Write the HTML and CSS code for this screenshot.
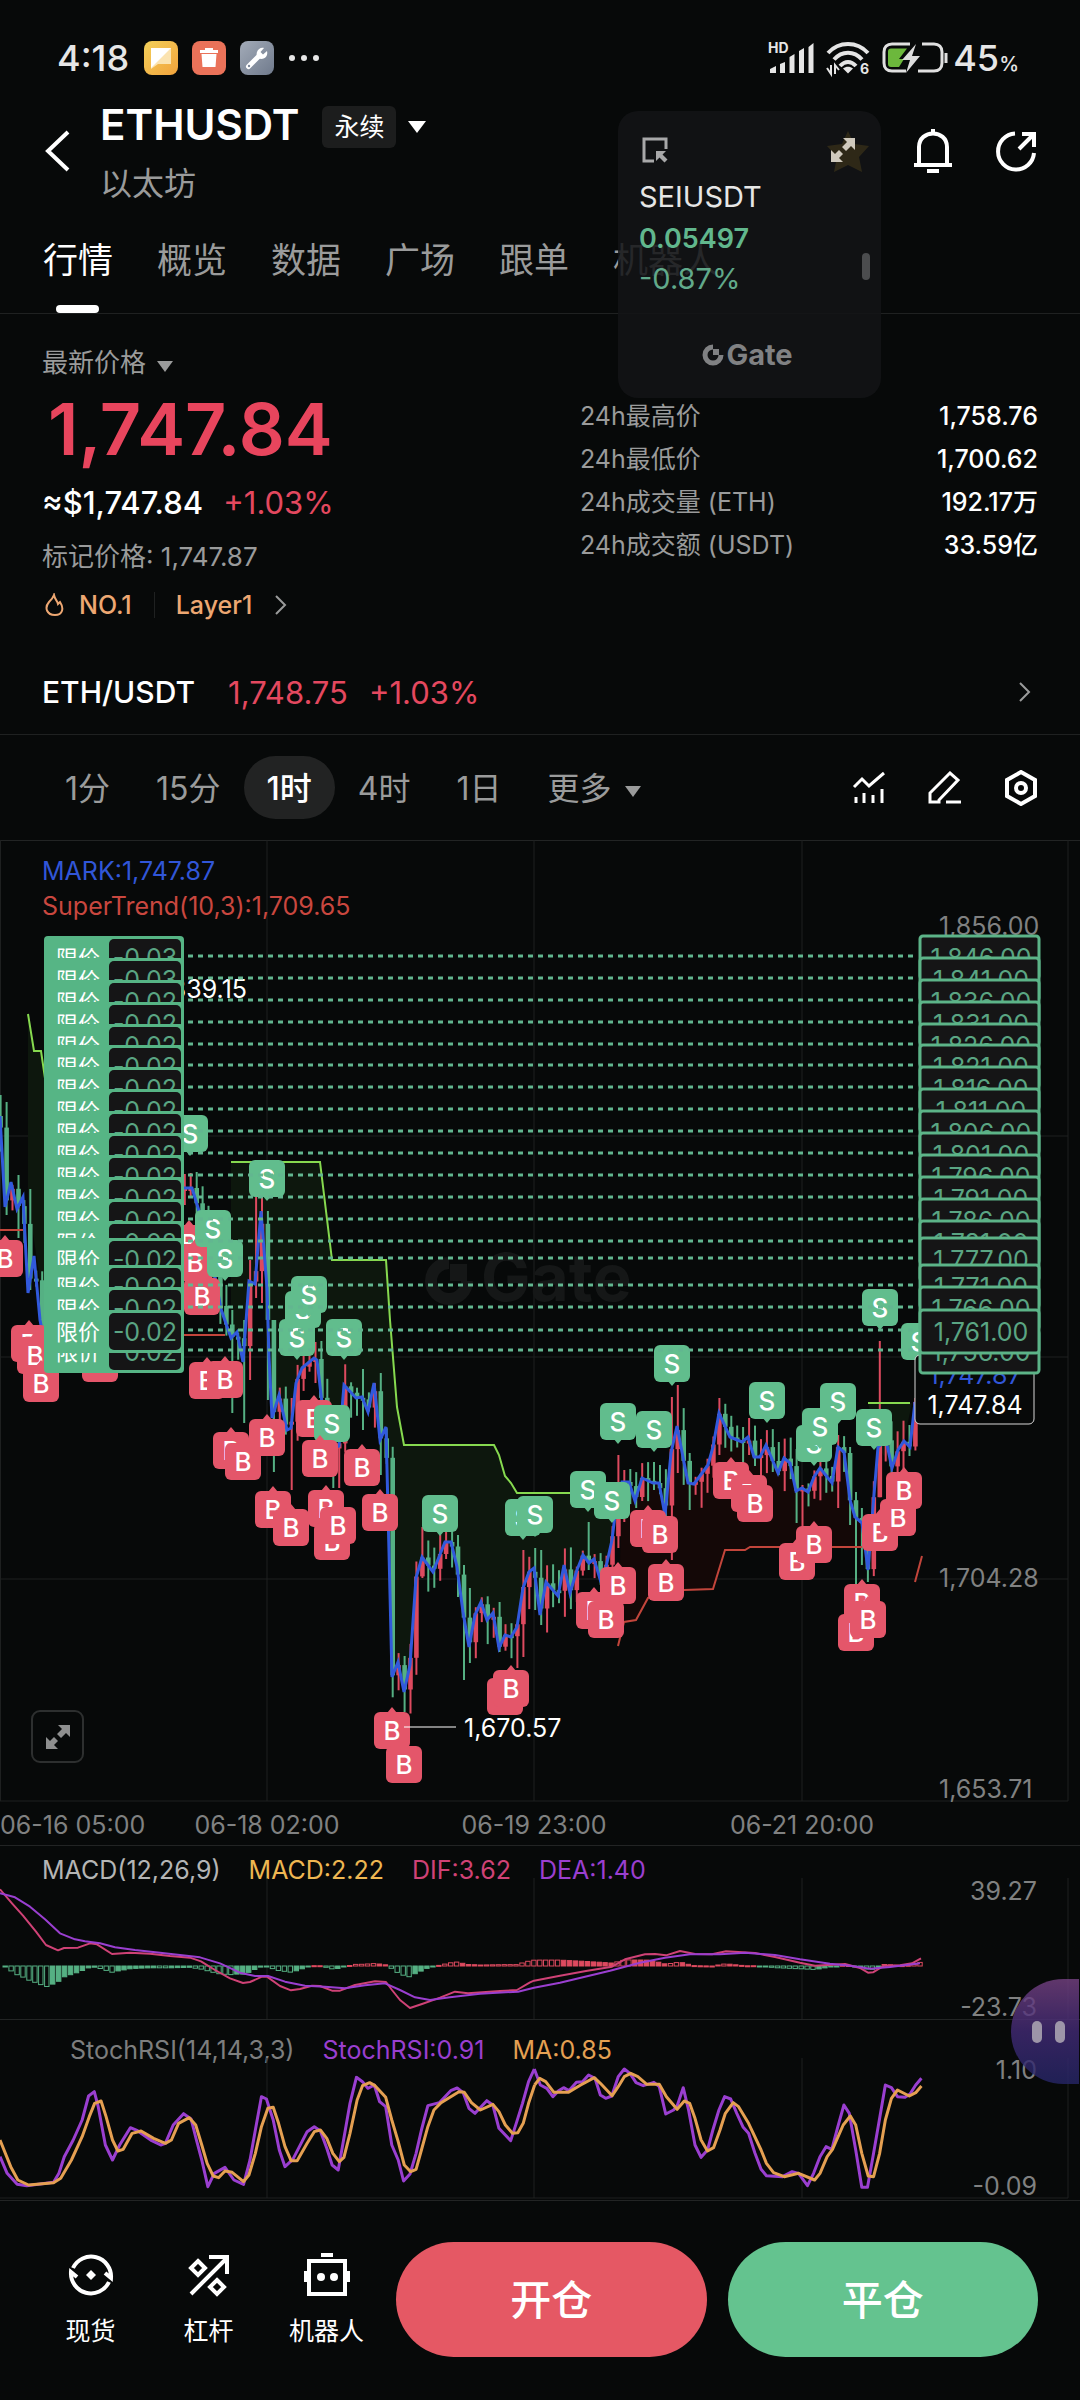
FILE: index.html
```html
<!DOCTYPE html>
<html lang="zh-CN">
<head>
  <meta charset="UTF-8">
  <meta name="viewport" content="width=device-width, initial-scale=1.0">
  <title>ETHUSDT 永续</title>
  <link rel="stylesheet" href="styles.css">
</head>
<body>

  <!-- 状态栏 -->
  <div class="status-bar">
    <span class="clock">4:18</span>
    <svg class="app-icon" viewBox="0 0 34 34">
      <defs><linearGradient id="note" x1="0" y1="0" x2="1" y2="1"><stop offset="0" stop-color="#f3d05a"/><stop offset="1" stop-color="#f2a33c"/></linearGradient></defs>
      <rect width="34" height="34" rx="8" fill="url(#note)"/><path d="M7 7h20v16H14L7 28z" fill="#fbe3b0"/><path d="M7 7h20L7 27z" fill="#fff"/>
    </svg>
    <svg class="app-icon" viewBox="0 0 34 34">
      <rect width="34" height="34" rx="8" fill="#ea7259"/><path d="M13 7h8v2h5v3H8V9h5zM9.500 13h15l-1 13h-13z" fill="#fff"/>
    </svg>
    <svg class="app-icon" viewBox="0 0 34 34">
      <defs><linearGradient id="tool" x1="0" y1="0" x2="1" y2="1"><stop offset="0" stop-color="#a3abb8"/><stop offset="1" stop-color="#6f7a8c"/></linearGradient></defs>
      <rect width="34" height="34" rx="8" fill="url(#tool)"/><path d="M8.500 25.500L19 15" stroke="#fff" stroke-width="5" stroke-linecap="round"/><path d="M24 7l-3.500 4 2.500 2.500L27 10c1 4-1 8-6 8-4-1-5-4-4-7 1-3 4-5 7-4z" fill="#fff"/><circle cx="9" cy="25" r="1.200" fill="#7c8798"/>
    </svg>
    <svg class="dots" viewBox="0 0 32 8"><circle cx="4" cy="4" r="3"/><circle cx="16" cy="4" r="3"/><circle cx="28" cy="4" r="3"/></svg>

    <svg class="signal" viewBox="0 0 48 34">
      <text x="0" y="12">HD</text>
      <path d="M2 32v-4l6-3v7zM12 32v-9l5-2v11zM21.500 32V16l5-3v19zM31 32V10l5-3v25zM40.500 32V6l5-4v30z"/>
    </svg>
    <svg class="wifi" viewBox="0 0 46 34">
      <g fill="none" stroke="#e4e4e4" stroke-width="4"><path d="M2 12c11-12 29-12 40 0"/><path d="M8 18.500c8-9 20-9 28 0"/><path d="M14 25c5-5.500 11-5.500 16 0"/></g>
      <path d="M17 27.500c3-2.500 7-2.500 10 0l-5 5z"/><path d="M1 27l4 6v-9M9 33v-9l4 5" fill="none" stroke="#e4e4e4" stroke-width="2"/>
      <text x="34" y="33">6</text>
    </svg>
    <svg class="battery" viewBox="0 0 66 32">
      <path d="M28 2H10c-5 0-8 3-8 8v11c0 5 3 8 8 8h14M36 29h16c5 0 8-3 8-8V10c0-5-3-8-8-8h-12" fill="none" stroke="#e0e0e0" stroke-width="3"/>
      <path d="M9 6.500h16L17 17h5l-5 8H9c-2 0-3-1-3-3V9.500c0-2 1-3 3-3z" fill="#6cb83c"/>
      <path d="M34 2L20 18h8l-4 13 14-17h-8z" fill="#dcdcdc"/><path d="M64 11v10" stroke="#e0e0e0" stroke-width="3"/>
    </svg>
    <span class="charge">45<small>%</small></span>
  </div>

  <!-- 标题 -->
  <header class="header">
    <button class="icon-btn" aria-label="返回"><svg width="28" height="44" viewBox="0 0 28 44"><path d="M26 2L6 21l20 19" class="line"/></svg></button>
    <div class="titles">
      <div class="title-row">
        <h1>ETHUSDT</h1>
        <span class="badge">永续</span>
        <svg width="18" height="12" viewBox="0 0 18 12"><path d="M0 0h18L9 12z" fill="#fff"/></svg>
      </div>
      <p>以太坊</p>
    </div>
    <div class="actions">
      <button class="icon-btn" aria-label="收藏"><svg width="44" height="44" viewBox="0 0 44 44"><path d="M22 1l6 13 15 2-10 11 3 15-14-7-14 7 3-15L1 16l15-2z" fill="#d6a51e"/></svg></button>
      <button class="icon-btn" aria-label="提醒"><svg width="40" height="46" viewBox="0 0 40 46"><path d="M20 0v5M6 36V18C6 0 34 0 34 18v18M1 36h38" class="line"/><path d="M14 40h12v4H14z" fill="#fff"/></svg></button>
      <button class="icon-btn" aria-label="分享"><svg width="42" height="42" viewBox="0 0 42 42"><path d="M19 2.500A18 18 0 1 0 38 22M23 18L36 5M26 3h12v13" class="line"/></svg></button>
    </div>
  </header>

  <nav class="tabs">
    <a href="#" class="active">行情</a>
    <a href="#">概览</a>
    <a href="#">数据</a>
    <a href="#">广场</a>
    <a href="#">跟单</a>
    <a href="#">机器人</a>
  </nav>

  <!-- 悬浮行情窗 -->
  <aside class="float-card">
    <div class="float-top">
      <svg width="26" height="26" viewBox="0 0 26 26"><path d="M24 12V2H2v22h10" fill="none" stroke="#a8a8a9" stroke-width="3"/><path d="M14 14h10l-3.500 3.500 5 5-3 3-5-5L14 24z" fill="#a8a8a9"/></svg>
      <svg width="26" height="26" viewBox="0 0 26 26"><path d="M13 1h12v12l-4-4-5 5-4-4 5-5zM1 13l4 4 4-4 4 4-4 4 4 4H1z" fill="#cfc9bd"/></svg>
    </div>
    <div class="float-name">SEIUSDT</div>
    <div class="float-price">0.05497</div>
    <div class="float-change">-0.87%</div>
    <div class="float-logo">
      <svg width="22" height="22" viewBox="0 0 22 22"><path d="M11 3a8 8 0 1 0 8 8" fill="none" stroke="#808183" stroke-width="5"/><path d="M11 5h6v6h-6z" fill="#808183"/></svg>Gate
    </div>
    <span class="float-handle"></span>
  </aside>

  <!-- 价格 -->
  <section class="ticker">
    <div>
      <div class="price-label">最新价格 <svg width="16" height="11" viewBox="0 0 16 11"><path d="M0 0h16L8 11z" fill="#9a9b9b"/></svg></div>
      <div class="price">1,747.84</div>
      <div class="fiat">≈$1,747.84 <span class="up">+1.03%</span></div>
      <div class="mark-price">标记价格: 1,747.87</div>
      <div class="tags">
        <svg width="24" height="24" viewBox="-3 0 24 24"><path d="M9 2c1 5 3 5 4 9l2-2c4 6 3 13-5 13S-1 15 4 9c2-2 4-4 5-7z" fill="none" stroke="#eda772" stroke-width="2"/></svg>
        <span>NO.1</span><i></i><span>Layer1</span>
        <svg width="12" height="22" viewBox="0 0 12 22"><path d="M1 2l9 9-9 9" class="chevron"/></svg>
      </div>
    </div>
    <dl class="stats">
      <dt>24h最高价</dt><dd>1,758.76</dd>
      <dt>24h最低价</dt><dd>1,700.62</dd>
      <dt>24h成交量 (ETH)</dt><dd>192.17万</dd>
      <dt>24h成交额 (USDT)</dt><dd>33.59亿</dd>
    </dl>
  </section>

  <a class="spot" href="#">
    <strong>ETH/USDT</strong>
    <span class="up">1,748.75</span>
    <span class="up">+1.03%</span>
    <svg width="12" height="22" viewBox="0 0 12 22"><path d="M1 2l9 9-9 9" class="chevron"/></svg>
  </a>

  <!-- 周期 -->
  <div class="toolbar">
    <button>1分</button>
    <button>15分</button>
    <button class="active">1时</button>
    <button>4时</button>
    <button>1日</button>
    <button>更多 <svg width="16" height="11" viewBox="0 0 16 11"><path d="M0 0h16L8 11z" fill="#9a9b9b"/></svg></button>
    <div class="tools">
      <button class="icon-btn" aria-label="指标"><svg width="34" height="34" viewBox="0 0 34 34"><path d="M2 16L10 8l7 7L32 2M4 26v6M12 22v10M21 24v8M30 18v14" class="line thin"/></svg></button>
      <button class="icon-btn" aria-label="画线"><svg width="34" height="34" viewBox="0 0 34 34"><path d="M2 31v-9L22 2l8 7L11 29v2zM18 31h15" class="line thin"/></svg></button>
      <button class="icon-btn" aria-label="设置"><svg width="34" height="36" viewBox="0 0 34 36"><path d="M17 2l14 8v16l-14 8-14-8V10z" class="line"/><circle cx="17" cy="18" r="5" class="line"/></svg></button>
    </div>
  </div>

  <!-- K线 -->
  <section class="panel main-panel">
    <div class="overlay-legend">
      <span class="c-blue">MARK:1,747.87</span>
      <span class="c-red">SuperTrend(10,3):1,709.65</span>
    </div>
    <svg id="mainChart" class="chart" viewBox="0 840 1080 1005"></svg>
    <button class="expand" aria-label="全屏"><svg width="26" height="26" viewBox="0 0 26 26"><path d="M13 1h12v12l-4-4-5 5-4-4 5-5zM1 13l4 4 4-4 4 4-4 4 4 4H1z" fill="#8e8f8f"/></svg></button>
  </section>

  <section class="panel">
    <div class="legend">
      <span class="c-light">MACD(12,26,9)</span>
      <span class="c-gold">MACD:2.22</span>
      <span class="c-pink">DIF:3.62</span>
      <span class="c-purple">DEA:1.40</span>
    </div>
    <svg id="macdChart" class="chart" viewBox="0 0 1080 133"></svg>
  </section>

  <section class="panel stoch-panel">
    <div class="legend">
      <span class="c-gray">StochRSI(14,14,3,3)</span>
      <span class="c-purple">StochRSI:0.91</span>
      <span class="c-orange">MA:0.85</span>
    </div>
    <svg class="chart" viewBox="0 0 1080 132">
      <path class="grid" d="M267 -8V132M534 -8V132M802 -8V132M1068 -8V132M0 132H1068"/>
      <text class="axis" x="1037" y="13" text-anchor="end">1.10</text>
      <text class="axis" x="1037" y="129" text-anchor="end">-0.09</text>
      <svg width="1080" height="132" viewBox="0 738 3024 396" preserveAspectRatio="none" overflow="visible">
        <polyline class="stoch-k" points="0,1010 20,1060 48,1093 75,1097 150,1087 165,1060 180,1010 205,960 230,900 248,828 264,815 275,860 295,975 315,1020 335,975 365,923 385,932 425,962 450,975 463,970 485,915 514,881 535,897 550,960 565,1020 582,1100 600,1060 630,1042 655,1080 682,1093 700,1020 715,930 732,830 746,837 765,900 782,990 798,1040 820,1018 860,935 880,920 897,933 915,985 930,1035 947,1050 962,960 980,850 998,772 1015,785 1030,805 1048,795 1063,845 1080,860 1097,975 1115,1020 1130,1083 1148,1062 1165,1000 1180,930 1198,857 1230,848 1262,812 1280,804 1297,818 1313,865 1330,880 1347,860 1363,842 1380,855 1397,925 1430,962 1447,905 1463,850 1480,785 1496,747"/>
        <polyline class="stoch-d" points="0,960 30,1040 50,1080 80,1095 150,1088 170,1075 200,1020 230,950 250,890 265,850 283,843 297,890 315,960 330,993 345,988 370,940 395,933 430,955 463,970 480,960 500,910 530,893 548,915 565,975 580,1030 597,1068 612,1073 630,1053 650,1057 682,1085 697,1065 715,1000 732,920 750,865 765,862 780,910 798,980 815,1022 832,1022 860,970 880,935 897,930 915,955 932,1000 950,1025 963,1012 980,940 1000,840 1015,797 1035,788 1050,797 1080,832 1097,900 1115,965 1132,1035 1150,1055 1165,1048 1180,990 1198,920 1215,870 1235,848 1285,815 1300,817 1320,848 1345,870 1380,853 1397,875 1415,915 1435,940 1450,938 1465,910 1480,850 1497,795"/>
        <g transform="translate(1456 0)">
          <polyline class="stoch-k" points="40,747 57,795 75,805 92,830 108,812 122,803 137,812 158,787 175,785 192,765 210,775 225,825 240,835 257,828 275,770 292,747 308,760 325,788 345,797 375,787 390,800 408,882 430,870 440,858 457,803 472,870 490,975 507,1012 525,990 540,930 557,870 573,830 590,837 607,880 625,922 640,940 658,1000 675,1048 690,1067 735,1070 762,1055 780,1060 805,1097 822,1060 840,1010 857,980 873,988 890,920 907,855 922,880 940,990 957,1102 973,1102 990,1000 1007,895 1023,795 1040,803 1057,830 1078,832 1092,822 1108,795 1124,775"/>
          <polyline class="stoch-d" points="41,795 55,775 72,785 95,817 135,817 170,795 208,773 225,790 258,827 275,800 292,770 310,760 330,770 355,793 390,793 410,830 440,868 460,843 475,850 490,895 507,960 525,993 542,983 560,930 575,880 597,848 612,860 640,910 675,990 690,1030 710,1058 740,1070 780,1060 825,1080 840,1060 860,1010 875,988 905,915 925,888 940,915 957,1000 975,1068 990,1070 1007,1000 1023,900 1040,835 1057,810 1090,828 1108,818 1124,798"/>
        </g>
      </svg>
    </svg>
    <button class="assistant" aria-label="助手"><i></i><i></i></button>
  </section>

  <!-- 底部操作 -->
  <footer class="bottom-bar">
    <a href="#"><svg width="48" height="48" viewBox="0 0 48 48"><path d="M6 17A20 20 0 0 1 44 27l-6-5M42 31A20 20 0 0 1 4 21l6 5" class="line"/><path d="M24 19l5 5-5 5-5-5z" fill="#fff"/></svg>现货</a>
    <a href="#"><svg width="48" height="48" viewBox="0 0 48 48"><path d="M6 43L41 8M24 6h18v17M13 10l7 7-7 7-7-7zM32 29l7 7-7 7-7-7z" class="line"/></svg>杠杆</a>
    <a href="#"><svg width="48" height="48" viewBox="0 0 48 48"><path d="M6 10h36v33H6zM3 20v11M45 20v11" class="line"/><path d="M18 2h12v4H18z" fill="#fff"/><circle cx="18" cy="26" r="4" fill="#fff"/><circle cx="31" cy="26" r="4" fill="#fff"/></svg>机器人</a>
    <button class="open">开仓</button>
    <button class="close">平仓</button>
  </footer>

  <script src="chart.js"></script>
</body>
</html>
```
FILE: styles.css
```css
* {
  box-sizing: border-box;
}

body {
  position: relative;
  margin: 0;
  min-height: 100vh;
  display: flex;
  flex-direction: column;
  background-color: #070909;
  color: #fff;
  font-family: Inter, "Noto Sans CJK SC", sans-serif;
  font-size: 26px;
}

button {
  background: none;
  border: none;
  padding: 0;
  color: inherit;
  font-family: inherit;
  cursor: pointer;
}

a {
  color: inherit;
  text-decoration: none;
}

svg {
  flex: none;
}

.icon-btn {
  display: flex;
}

.line {
  fill: none;
  stroke: #fff;
  stroke-width: 4;
}

.line.thin {
  stroke-width: 3;
}

.chevron {
  fill: none;
  stroke: #9a9b9b;
  stroke-width: 2;
}

.up {
  color: #e4485f;
}

/* status bar */
.status-bar {
  display: flex;
  align-items: center;
  height: 100px;
  padding: 16px 61px 0 57px;
  color: #e6e6e6;
}

.clock {
  font-size: 36px;
  font-weight: 500;
  margin-right: 15px;
}

.app-icon {
  width: 34px;
  height: 34px;
  margin-right: 14px;
}

.dots {
  width: 32px;
  fill: #e6e6e6;
  margin-right: auto;
}

.signal,
.wifi {
  height: 34px;
  margin-right: 10px;
  fill: #e6e6e6;
  font-size: 14px;
  font-weight: 700;
  overflow: visible;
}

.battery {
  width: 66px;
  margin-right: 5px;
}

.charge {
  font-size: 36px;
  font-weight: 500;
}

.charge small {
  font-size: 20px;
}

/* header */
.header {
  display: flex;
  align-items: center;
  padding: 0 42px;
}

.titles {
  margin-left: 30px;
}

.title-row {
  display: flex;
  align-items: center;
  height: 48px;
}

h1 {
  margin: 0 23px 0 0;
  font-size: 42px;
  font-weight: 600;
}

.badge {
  padding: 0 12px;
  margin: 6px 12px 0 0;
  border-radius: 6px;
  background-color: #1c1d1d;
  font-size: 25px;
  line-height: 42px;
}

.title-row svg {
  margin-top: 6px;
}

.titles p {
  margin: 16px 0 0;
  color: #9a9b9b;
  font-size: 32px;
  line-height: 40px;
}

.actions {
  display: flex;
  align-items: center;
  gap: 43px;
  margin-left: auto;
}

.tabs {
  display: flex;
  gap: 44px;
  padding: 32px 43px 0;
  border-bottom: 1px solid #1f2121;
  color: #9a9b9b;
  font-size: 35px;
  line-height: 48px;
}

.tabs a {
  position: relative;
  padding-bottom: 29px;
}

.tabs .active {
  color: #fff;
}

.tabs .active::after {
  content: "";
  position: absolute;
  left: 13px;
  right: 14px;
  bottom: 0;
  height: 8px;
  border-radius: 4px;
  background-color: #fff;
}

/* floating quote */
.float-card {
  position: absolute;
  top: 111px;
  right: 199px;
  width: 263px;
  height: 287px;
  padding: 26px 25px 25px 21px;
  border-radius: 20px;
  background-color: rgba(19, 20, 22, 0.86);
  display: flex;
  flex-direction: column;
  z-index: 2;
}

.float-top {
  display: flex;
  justify-content: space-between;
  padding-left: 3px;
}

.float-name {
  margin-top: 14px;
  color: #e6e6e6;
  font-size: 29px;
  line-height: 40px;
}

.float-price {
  color: #61b78d;
  font-size: 27px;
  font-weight: 600;
  line-height: 44px;
}

.float-change {
  color: #61a98a;
  font-size: 29px;
  line-height: 36px;
}

.float-logo {
  display: flex;
  align-items: center;
  justify-content: center;
  gap: 2px;
  margin-top: auto;
  color: #808183;
  font-size: 29px;
  font-weight: 700;
  line-height: 36px;
}

.float-handle {
  position: absolute;
  right: 11px;
  top: 142px;
  width: 8px;
  height: 27px;
  border-radius: 4px;
  background-color: #4b4c4e;
}

/* ticker */
.ticker {
  display: grid;
  grid-template-columns: 538fr 458fr;
  padding: 31px 42px 0;
  color: #9a9b9b;
}

.price-label,
.mark-price,
.tags {
  font-size: 26px;
  line-height: 36px;
}

.price-label svg {
  margin-left: 4px;
}

.price {
  margin: 4px 0 10px 6px;
  color: #e8455d;
  font-size: 72px;
  font-weight: 600;
  line-height: 88px;
}

.fiat {
  color: #fff;
  font-size: 31px;
  font-weight: 500;
  line-height: 40px;
}

.fiat .up {
  margin-left: 12px;
  font-weight: 400;
}

.mark-price {
  margin-top: 16px;
}

.tags {
  display: flex;
  align-items: center;
  margin-top: 12px;
  color: #eda772;
  font-size: 25px;
  font-weight: 500;
}

.tags span {
  margin-left: 13px;
}

.tags i {
  width: 1px;
  height: 26px;
  margin: 0 8px 0 22px;
  background-color: #1f2121;
}

.tags svg:last-child {
  margin-left: 23px;
}

.stats {
  display: grid;
  grid-template-columns: 1fr auto;
  align-content: start;
  margin: 50px 0 0;
  font-size: 25px;
  line-height: 43px;
}

.stats dd {
  margin: 0;
  color: #fff;
  font-weight: 500;
  text-align: right;
}

.spot {
  display: flex;
  align-items: center;
  height: 85px;
  margin-top: 27px;
  padding: 0 49px 0 42px;
  border-bottom: 1px solid #1f2121;
  font-size: 30px;
}

.spot strong {
  margin-right: 12px;
  font-weight: 500;
}

.spot .up {
  margin-left: 21px;
  font-size: 31px;
}

.spot svg {
  margin-left: auto;
}

/* intervals */
.toolbar {
  display: flex;
  align-items: center;
  height: 105px;
  padding: 0 42px;
}

.toolbar > button {
  height: 63px;
  padding: 0 23px 4px;
  border-radius: 32px;
  color: #9a9b9b;
  font-size: 32px;
}

.toolbar > .active {
  background-color: #222323;
  color: #fff;
  font-weight: 500;
}

.toolbar > button svg {
  margin: 0 0 3px 4px;
}

.tools {
  display: flex;
  align-items: center;
  gap: 42px;
  margin-left: auto;
}

/* charts */
.panel {
  position: relative;
  border-top: 1px solid #222424;
}

.chart {
  display: block;
  width: 100%;
  overflow: visible;
  font-size: 25px;
}

.main-panel .chart {
  margin-top: -1px;
}

.overlay-legend {
  position: absolute;
  top: 13px;
  left: 42px;
  display: flex;
  flex-direction: column;
  font-size: 25px;
  line-height: 35px;
}

.legend {
  display: flex;
  gap: 28px;
  padding: 8px 42px 0;
  font-size: 25px;
  line-height: 32px;
}

.stoch-panel {
  margin-bottom: 2px;
}

.stoch-panel .legend {
  padding: 14px 70px 0;
}

.c-blue { color: #3156d8; }
.c-red { color: #c9473f; }
.c-light { color: #b4b5b5; }
.c-gray { color: #7d7e7e; }
.c-gold { color: #eeb752; }
.c-pink { color: #cf4276; }
.c-purple { color: #9a3fd0; }
.c-orange { color: #e5a052; }

.grid {
  fill: none;
  stroke: #1e2020;
  stroke-width: 1;
}

.axis {
  fill: #808181;
}

.axis-white {
  fill: #fff;
}

.watermark text {
  fill: #151717;
  font-size: 66px;
  font-weight: 700;
}

.green { fill: #61bd8d; }
.red { fill: #e4566a; }
.candle-up { fill: #dd4a5f; }
.candle-down { fill: #55b083; }

.mark-line {
  fill: none;
  stroke: #3159dc;
  stroke-width: 3;
}

.trend-up,
.trend-down {
  fill: none;
  stroke: #c2453b;
  stroke-width: 2;
}

.trend-down {
  stroke: #86d94f;
}

.fill-down { fill: #0d170d; }
.fill-up { fill: #140807; }

.marker text {
  fill: #fff;
  font-size: 26px;
  font-weight: 500;
  text-anchor: middle;
}

.order-line {
  stroke: #62b690;
  stroke-width: 3;
  stroke-dasharray: 5 5;
}

.tag-text {
  fill: #fff;
  font-size: 22px;
}

.tag-box {
  fill: #151516;
  stroke: #5cb488;
  stroke-width: 3;
}

.tag-qty {
  fill: #151516;
}

.tag-value {
  fill: #5aa583;
  text-anchor: middle;
}

.last-price {
  fill: #070909;
  stroke: #d8d8d8;
  stroke-width: 1;
}

.dif,
.dea,
.stoch-k,
.stoch-d {
  fill: none;
  stroke: #cf4276;
  stroke-width: 3;
  stroke-linejoin: round;
  vector-effect: non-scaling-stroke;
}

.dif,
.dea {
  stroke-width: 2;
}

.dea,
.stoch-k {
  stroke: #9a3fd0;
}

.stoch-d {
  stroke: #e5a052;
}

.expand {
  position: absolute;
  left: 31px;
  bottom: 82px;
  width: 53px;
  height: 53px;
  display: flex;
  align-items: center;
  justify-content: center;
  border: 2px solid #2d2f2f;
  border-radius: 9px;
}

.assistant {
  position: absolute;
  top: -41px;
  right: 1px;
  width: 68px;
  height: 105px;
  display: flex;
  align-items: center;
  justify-content: flex-end;
  gap: 13px;
  padding-right: 14px;
  border-radius: 53px 0 0 53px;
  background: linear-gradient(rgba(118, 66, 132, 0.8), rgba(66, 42, 118, 0.8) 50%, rgba(38, 38, 104, 0.8));
}

.assistant i {
  width: 10px;
  height: 22px;
  border-radius: 5px;
  background-color: #9d95a8;
}

/* bottom bar */
.bottom-bar {
  display: grid;
  grid-template-columns: 97px 97px 97px 1fr 1fr;
  align-items: center;
  gap: 21px;
  flex: 1;
  padding: 0 42px 2px;
  border-top: 1px solid #222424;
}

.bottom-bar a {
  display: flex;
  flex-direction: column;
  align-items: center;
  gap: 14px;
  font-size: 25px;
  line-height: 36px;
}

.bottom-bar button {
  height: 115px;
  padding-bottom: 6px;
  border-radius: 58px;
  font-size: 41px;
  font-weight: 500;
}

.open {
  background-color: #e55864;
}

.close {
  background-color: #64c38f;
}
```
FILE: chart.js
```js
// 标记价格折线
const mark = [
  [[0,1116],[5,1207],[11,1182],[17,1209],[23,1197],[28,1293],[34,1256],[40,1320],[46,1350]],
  [[180,1188],[186,1188],[192,1188],[199,1211],[210,1250],[221,1309],[231,1338],[237,1332],[243,1362],[249,1281],[255,1284],[261,1211],[267,1288],[269,1356],[272,1418],[279,1395],[287,1430],[291,1428],[296,1383],[302,1368],[314,1358],[317,1360],[322,1403],[330,1450],[339,1446],[344,1385],[356,1398],[362,1397],[368,1412],[374,1383],[380,1440],[386,1427],[392,1677],[398,1662],[404,1692],[410,1665],[416,1578],[422,1557],[433,1572],[439,1557],[445,1542],[451,1542],[457,1567],[463,1612],[469,1647],[475,1615],[481,1602],[487,1620],[493,1613],[499,1648],[505,1635],[511,1637],[517,1627],[523,1588],[529,1572],[534,1568],[540,1615],[546,1582],[558,1596],[564,1565],[570,1593],[577,1570],[583,1555],[589,1563],[594,1559],[600,1579],[606,1567],[612,1540],[616,1507],[622,1482],[629,1482],[635,1501],[642,1478],[653,1483],[659,1483],[665,1515],[671,1453],[677,1426],[688,1483],[694,1484],[708,1465],[713,1447],[719,1413],[730,1437],[742,1442],[748,1437],[754,1457],[760,1457],[766,1445],[778,1473],[784,1458],[790,1463],[796,1491],[802,1488],[808,1492],[814,1477],[820,1468],[832,1483],[838,1447],[844,1452],[850,1500],[855,1517],[862,1523],[868,1570],[873,1507],[878,1447],[886,1440],[892,1468],[898,1450],[904,1441],[910,1447],[915,1402]]
];

// 长影线: x, 高, 低
const longWicks = [
  [5,1102,1215], [17,1175,1238], [28,1189,1290], [243,1320,1423], [231,1310,1413], [249,1260,1380],
  [255,1197,1298], [261,1198,1303], [267,1211,1400], [273,1380,1472], [291,1398,1490], [332,1440,1488],
  [338,1430,1488], [362,1369,1430], [380,1373,1475], [404,1656,1712], [422,1527,1578], [457,1535,1597],
  [463,1565,1680], [469,1588,1663], [499,1602,1652], [517,1625,1668], [523,1550,1657], [534,1548,1610],
  [540,1550,1625], [588,1522,1570], [618,1455,1548], [654,1462,1490], [671,1397,1560], [677,1385,1473],
  [690,1453,1510], [719,1398,1455], [748,1418,1455], [796,1449,1523], [802,1485,1530], [838,1435,1508],
  [850,1447,1525], [856,1492,1585], [862,1508,1565], [868,1520,1582], [880,1341,1495], [909,1425,1456]
];

// 委托: 价格, y, 数量
const orders = [
  ['1,846.00',956,'-0.03'], ['1,841.00',978,'-0.03'], ['1,836.00',1000,'-0.02'], ['1,831.00',1022,'-0.02'],
  ['1,826.00',1044,'-0.02'], ['1,821.00',1065,'-0.02'], ['1,816.00',1087,'-0.02'], ['1,811.00',1109,'-0.02'],
  ['1,806.00',1131,'-0.02'], ['1,801.00',1153,'-0.02'], ['1,796.00',1175,'-0.02'], ['1,791.00',1197,'-0.02'],
  ['1,786.00',1219,'-0.02'], ['1,781.00',1241,'-0.02'], ['1,777.00',1258,'-0.02'], ['1,771.00',1285,'-0.02'],
  ['1,766.00',1307,'-0.02'], ['1,756.00',1350,'-0.02'], ['1,761.00',1330,'-0.02']
];

// 买卖点
const markers = [
  ['B',5,1258], ['B',29,1343], ['B',35,1355], ['B',41,1383], ['B',100,1363], ['B',189,1243], ['B',195,1262],
  ['B',202,1296], ['S',190,1133], ['S',213,1228], ['S',225,1258], ['S',267,1178], ['S',303,1309],
  ['S',309,1294], ['S',297,1337], ['S',344,1337], ['B',207,1380], ['B',225,1379], ['B',231,1450],
  ['B',243,1461], ['B',267,1437], ['B',314,1418], ['S',332,1423], ['B',320,1458], ['B',362,1467],
  ['B',273,1509], ['B',291,1527], ['B',326,1508], ['B',332,1541], ['B',338,1525], ['B',380,1512],
  ['S',440,1513], ['S',523,1517], ['S',535,1514], ['B',392,1730], ['B',404,1764], ['B',505,1696],
  ['B',511,1688], ['S',672,1363], ['S',767,1400], ['S',838,1401], ['S',814,1443], ['S',820,1426],
  ['S',874,1427], ['S',618,1421], ['S',654,1429], ['S',588,1489], ['S',612,1500], ['S',919,1341],
  ['S',880,1307], ['B',648,1528], ['B',660,1534], ['B',731,1480], ['B',749,1493], ['B',755,1503],
  ['B',618,1585], ['B',594,1610], ['B',606,1619], ['B',666,1582], ['B',797,1561], ['B',814,1544],
  ['B',880,1532], ['B',898,1517], ['B',904,1490], ['B',862,1602], ['B',856,1632], ['B',868,1619]
];

const STEP = 5.94;

function valueAt(line, x) {
  for (let i = 1; i < line.length; i++) {
    const [x0, y0] = line[i - 1];
    const [x1, y1] = line[i];
    if (x <= x1) return y0 + (y1 - y0) * (x - x0) / (x1 - x0);
  }
  return line[line.length - 1][1];
}

function drawMain() {
  let s = '<path class="grid" d="M0.5 840V1801M267 840V1801M534 840V1801M802 840V1801M1068 840V1801M0 1136H1068M0 1357H1068M0 1579H1068M0 1801H1068"/>';

  s += '<g class="watermark"><path d="M449 1263A18 18 0 1 0 467 1281" fill="none" stroke="#151717" stroke-width="12"/><path d="M450 1264h17v17h-17z" fill="#151717"/><text x="481" y="1301">Gate</text></g>';

  // SuperTrend 区域
  const line = mark[1];
  const part = (a, b) => line.filter(p => p[0] >= a && p[0] <= b).reverse().map(p => p.join()).join(' ');
  const down = '231,1162 320,1162 332,1260 386,1260 390,1320 397,1407 404,1445 494,1445 499,1455 505,1476 511,1483 517,1493 570,1493';
  const up = '618,1646 624,1622 636,1620 648,1598 684,1590 713,1589 725,1550 745,1550 750,1547 862,1547';
  s += `<polygon class="fill-down" points="${down} 612,1500 ${part(231, 612)}"/>`;
  s += '<polygon class="fill-down" points="28,1014 34,1051 41,1051 46,1085 46,1320 28,1200"/><polygon class="fill-down" points="868,1403 912,1403 904,1441 892,1468 878,1447"/>';
  s += `<polygon class="fill-up" points="${up} ${part(618, 868)}"/>`;

  // 蜡烛
  mark.forEach(line => {
    const start = line[0][0];
    for (let x = 915.4, n = 0; x > start; x -= STEP, n++) {
      if (x > line[line.length - 1][0] + 1) continue;
      const close = valueAt(line, x);
      const open = valueAt(line, Math.max(start, x - STEP));
      const cls = close <= open ? 'candle-up' : 'candle-down';
      let top = Math.min(open, close);
      const height = Math.max(3, Math.abs(close - open));
      let high = top - 4 - (n * 37 % 19);
      let low = top + height + 4 + (n * 53 % 23);
      const wick = longWicks.find(w => Math.abs(w[0] - x) < STEP / 2);
      if (wick) {
        high = Math.min(top, wick[1]);
        low = Math.max(top + height, wick[2]);
      }
      s += `<rect class="${cls}" x="${(x - 1).toFixed(1)}" y="${high.toFixed(1)}" width="2" height="${(low - high).toFixed(1)}"/>`;
      s += `<rect class="${cls}" x="${(x - 2.3).toFixed(1)}" y="${top.toFixed(1)}" width="4.6" height="${height.toFixed(1)}"/>`;
    }
    s += `<polyline class="mark-line" points="${line.map(p => p.join()).join(' ')}"/>`;
  });

  s += `<polyline class="trend-down" points="${down}"/><polyline class="trend-down" points="28,1014 34,1051 41,1051 46,1085"/><path class="trend-down" d="M868 1403H910"/>`;
  s += `<polyline class="trend-up" points="${up}"/><path class="trend-up" d="M915 1582L922 1556M0 1230H23M184 1335H225"/>`;

  markers.forEach(([side, x, y]) => {
    const tip = side === 'S' ? `M${x - 5} ${y + 17}l5 6 5-6z` : `M${x - 5} ${y - 17}l5-6 5 6z`;
    s += `<g class="marker ${side === 'S' ? 'green' : 'red'}"><rect x="${x - 18}" y="${y - 18}" width="36" height="37" rx="6"/><path d="${tip}"/><text x="${x}" y="${y + 10}">${side}</text></g>`;
  });

  // 价格轴
  s += '<text class="axis" x="939" y="935">1,856.00</text><text class="axis" x="939" y="1587">1,704.28</text><text class="axis" x="939" y="1798">1,653.71</text>';
  s += '<text class="axis-white" x="247" y="998" text-anchor="end">1,839.15</text>';
  s += '<path d="M404 1727H456" stroke="#fff"/><text class="axis-white" x="464" y="1737">1,670.57</text>';
  s += '<rect class="last-price" x="915" y="1355" width="119" height="69" rx="5"/><text x="975" y="1384" fill="#3156d8" text-anchor="middle">1,747.87</text><text class="axis-white" x="975" y="1414" text-anchor="middle">1,747.84</text>';

  // 委托线和标签
  orders.forEach(o => {
    s += `<path class="order-line" d="M188 ${o[1]}H918"/>`;
  });
  orders.forEach(([price, y, qty]) => {
    s += `<rect x="44" y="${y - 20}" width="140" height="43" rx="4" fill="#56b585"/><text class="tag-text" x="56" y="${y + 10}">限价</text>`;
    s += `<rect class="tag-qty" x="109" y="${y - 17}" width="72" height="37" rx="5"/><text class="tag-value" x="145" y="${y + 11}">${qty}</text>`;
    s += `<rect class="tag-box" x="920" y="${y - 20}" width="119" height="43" rx="3"/><text class="tag-value" x="981" y="${y + 11}">${price}</text>`;
  });

  // 时间轴
  s += '<text class="axis" x="0" y="1834">06-16 05:00</text>';
  [['06-18 02:00', 267], ['06-19 23:00', 534], ['06-21 20:00', 802]].forEach(([t, x]) => {
    s += `<text class="axis" x="${x}" y="1834" text-anchor="middle">${t}</text>`;
  });
  document.getElementById('mainChart').innerHTML = s;
}

const dif = [[0,208],[12,250],[23,287],[36,335],[46,375],[58,391],[64,384],[78,383],[90,370],[97,373],[112,402],[130,398],[150,401],[170,408],[190,413],[201,424],[215,450],[230,475],[243,489],[250,486],[262,470],[267,470],[280,498],[291,511],[300,507],[312,497],[320,498],[332,512],[340,512],[355,495],[375,484],[386,486],[392,510],[400,540],[410,564],[422,552],[440,533],[455,515],[468,520],[500,513],[517,510],[530,487],[534,482],[560,467],[586,453],[612,440],[625,418],[645,403],[655,402],[666,406],[680,393],[695,402],[712,403],[726,394],[755,399],[775,411],[800,428],[815,437],[845,432],[860,444],[868,458],[873,457],[884,437],[900,436],[912,430],[921,415]];
const dea = [[0,220],[15,232],[30,260],[45,298],[60,340],[75,358],[85,364],[100,370],[115,382],[135,390],[160,398],[200,412],[220,430],[240,458],[255,468],[268,468],[285,485],[305,497],[325,500],[345,505],[365,496],[385,490],[400,510],[415,532],[430,540],[450,532],[480,521],[518,515],[534,503],[560,488],[610,452],[640,428],[665,413],[690,403],[720,403],[745,398],[775,405],[800,418],[830,431],[850,437],[870,446],[890,441],[920,430]];

function drawMacd() {
  let s = '<path class="grid" d="M267 -8V133M534 -8V133M802 -8V133M1068 -8V133"/>';
  s += '<text class="axis" x="1037" y="14" text-anchor="end">39.27</text><text class="axis" x="1037" y="130" text-anchor="end">-23.73</text>';
  const zero = 80;
  let prev = 0;
  for (let x = 5; x < 924; x += STEP) {
    const h = (valueAt(dif, x) - valueAt(dea, x)) * 0.28;
    const color = h > 0 ? '#55b083' : '#dd4a5f';
    const fill = Math.abs(h) >= Math.abs(prev) ? 'none' : color;
    s += `<rect x="${(x - 2).toFixed(1)}" y="${(h > 0 ? zero : zero + h).toFixed(1)}" width="4.4" height="${Math.max(1, Math.abs(h)).toFixed(1)}" fill="${fill}" stroke="${color}"/>`;
    prev = h;
  }
  s += '<svg width="1080" height="133" viewBox="0 198 1080 399" preserveAspectRatio="none" overflow="visible">';
  s += `<polyline class="dif" points="${dif.map(p => p.join()).join(' ')}"/><polyline class="dea" points="${dea.map(p => p.join()).join(' ')}"/></svg>`;
  document.getElementById('macdChart').innerHTML = s;
}

drawMain();
drawMacd();
```
